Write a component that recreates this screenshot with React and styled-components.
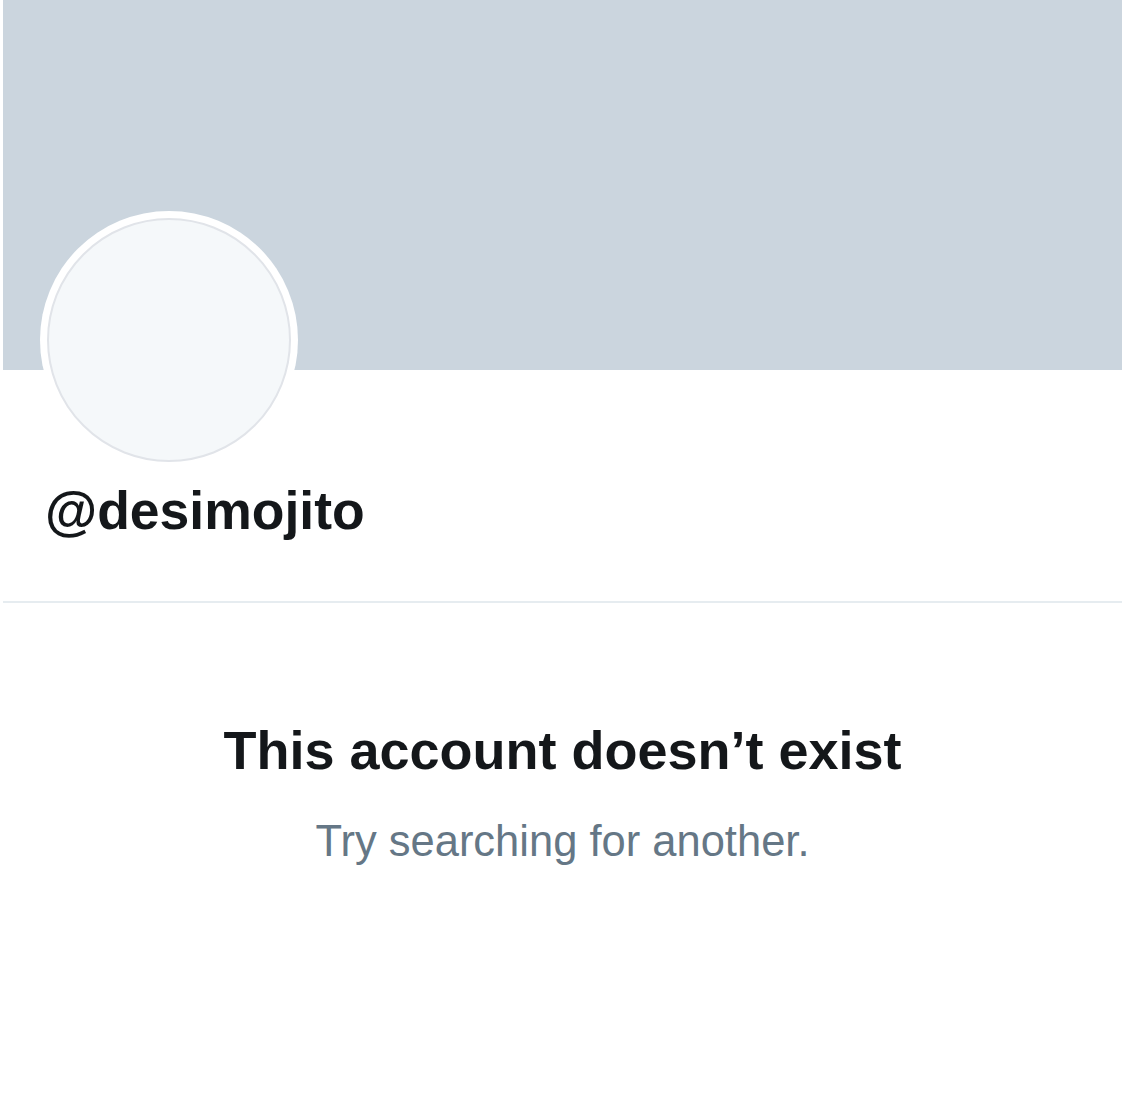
import styled, { createGlobalStyle } from "styled-components";

const GlobalStyle = createGlobalStyle`
  html, body {
    margin: 0;
    padding: 0;
    background: #ffffff;
  }

  body {
    font-family: "Liberation Sans", Arial, sans-serif;
    color: #14171a;
  }
`;

const Page = styled.main`
  width: 1125px;
  min-height: 1116px;
  padding: 0 3px;
  box-sizing: border-box;
  background: #ffffff;
`;

const Banner = styled.div`
  height: 370px;
  background: #cbd5de;
`;

const ProfileHeader = styled.section`
  padding: 0 0 58px 37px;
  border-bottom: 2px solid #e6ecf0;
`;

const Avatar = styled.div`
  width: 258px;
  height: 258px;
  margin-top: -159px;
  box-sizing: border-box;
  border-radius: 50%;
  background: #ffffff;
  padding: 7px;

  &::after {
    content: "";
    display: block;
    width: 100%;
    height: 100%;
    box-sizing: border-box;
    border-radius: 50%;
    border: 2px solid #e1e4e9;
    background: #f5f8fa;
  }
`;

const Handle = styled.h1`
  margin: 10px 0 0 5px;
  font-size: 53.5px;
  line-height: 1.2;
  font-weight: 700;
  color: #14171a;
`;

const EmptyState = styled.section`
  display: flex;
  flex-direction: column;
  align-items: center;
  text-align: center;
  padding-top: 115px;
`;

const Title = styled.h2`
  margin: 0;
  font-size: 54px;
  line-height: 1.2;
  font-weight: 700;
  color: #14171a;
`;

const Hint = styled.p`
  margin: 32px 0 0;
  font-size: 43.5px;
  line-height: 1.2;
  font-weight: 400;
  color: #657786;
`;

export default function App() {
  return (
    <>
      <GlobalStyle />
      <Page>
        <Banner />
        <ProfileHeader>
          <Avatar />
          <Handle>@desimojito</Handle>
        </ProfileHeader>
        <EmptyState>
          <Title>This account doesn’t exist</Title>
          <Hint>Try searching for another.</Hint>
        </EmptyState>
      </Page>
    </>
  );
}
